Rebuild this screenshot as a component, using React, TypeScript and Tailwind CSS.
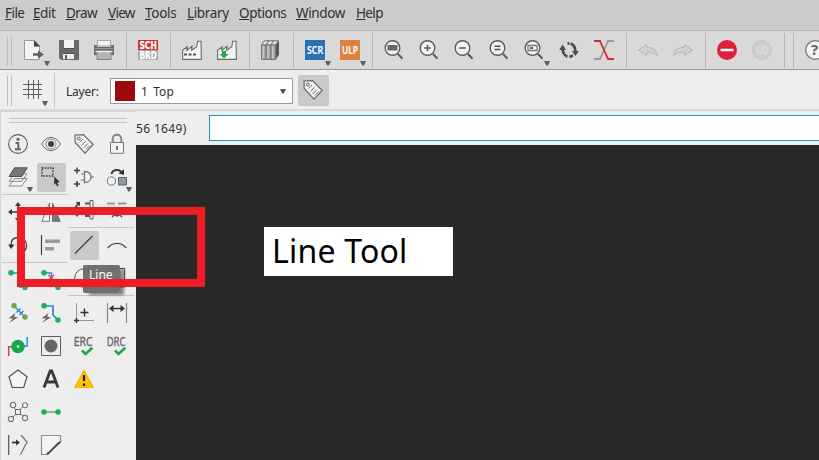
import type { ReactNode } from "react";

const DARK = "#5c5c5c";

function Icon({ children }: { children: ReactNode }) {
  return (
    <svg width="20" height="20" viewBox="0 0 20 20" fill="none" className="block shrink-0 overflow-visible">
      {children}
    </svg>
  );
}

function Caret({ className }: { className: string }) {
  return (
    <svg width="6" height="5" viewBox="0 0 6 5" className={`absolute ${className}`}>
      <path d="M0 0H6L3.8 4.6H2.2Z" fill="#5f5f5f" />
    </svg>
  );
}

function Tool({ children, menu }: { children: ReactNode; menu?: boolean }) {
  return (
    <div className="relative mr-[15px] shrink-0">
      {children}
      {menu && <Caret className="left-5 top-[21px]" />}
    </div>
  );
}

function Divider() {
  return <div className="-ml-[3px] mr-[11px] h-[35px] w-px shrink-0 bg-[#b5b5b5]" />;
}

function Grip() {
  return <div className="h-[30px] w-[5px] shrink-0 border-x border-[#bdbdbd]" />;
}

function Lens({ children }: { children?: ReactNode }) {
  return (
    <Icon>
      <path d="M14 14L18.5 18.7" stroke={DARK} strokeWidth="2" />
      <circle cx="8.5" cy="8" r="7.3" fill="#f2f2f2" stroke={DARK} strokeWidth="1.4" />
      {children}
    </Icon>
  );
}

function Factory({ children }: { children: ReactNode }) {
  return (
    <Icon>
      <path d="M.6 19.4V10.3L5.2 6.8L4.8 10.5L10 6.3L9.6 10.3L14.8 6.8L15.7 1.2H19L19.4 19.4Z" fill="#f4f4f4" stroke="#6a6a6a" strokeWidth="1.1" />
      {children}
    </Icon>
  );
}

function Check({ label }: { label: string }) {
  return (
    <Icon>
      <text x="-.3" y="9.5" fontSize="12.6" textLength="18.8" lengthAdjust="spacingAndGlyphs" fill="#666" stroke="#666" strokeWidth=".4" fontFamily="'Open Sans', sans-serif">{label}</text>
      <path d="M8 14.5L11.5 18L18.3 11.8" stroke="#16aa4b" strokeWidth="2.6" />
    </Icon>
  );
}

function Badge({ label, color }: { label: string; color: string }) {
  return (
    <Icon>
      <path d="M0 0H20V20H0Z" fill={color} />
      <text x="2" y="14" fontSize="10.6" fontWeight="600" textLength="16" lengthAdjust="spacingAndGlyphs" fill="white" stroke="white" strokeWidth=".2" fontFamily="'Open Sans', sans-serif">{label}</text>
    </Icon>
  );
}

function Cell({ children, active, menu }: { children?: ReactNode; active?: boolean; menu?: boolean }) {
  return (
    <div className="relative h-[33px] w-[33px] p-[2px]">
      <div className={`h-[29px] w-[29px] rounded-[2px] p-1 ${active ? "bg-[#c9c9c9]" : ""}`}>{children}</div>
      {menu && <Caret className="left-[25px] top-[26px]" />}
    </div>
  );
}

function Rule() {
  return <div className="col-span-2 h-[2px] border-t border-[#c6c6c6]" />;
}

const menus = [
  ["File", "w-[28px] tracking-[-0.55px]"],
  ["Edit", "w-[33px] tracking-[-0.4px]"],
  ["Draw", "w-[42px] tracking-[-0.6px]"],
  ["View", "w-[37px] tracking-[-0.7px]"],
  ["Tools", "w-[42px] tracking-[-0.3px]"],
  ["Library", "w-[52px] tracking-[-0.35px]"],
  ["Options", "w-[57px] tracking-[-0.4px]"],
  ["Window", "w-[60px] tracking-[-0.35px]"],
  ["Help", "w-[40px] tracking-[-0.65px]"],
];

function MenuBar() {
  return (
    <div className="flex h-[30px] items-center bg-[#cbcbcb] pb-[3px] pl-[5px] text-[13.5px] text-[#303030]">
      {menus.map(([name, style]) => (
        <div key={name} className={`shrink-0 whitespace-nowrap ${style}`}>
          <span className="underline decoration-1 underline-offset-1">{name[0]}</span>
          {name.slice(1)}
        </div>
      ))}
    </div>
  );
}

function MainToolbar() {
  return (
    <div className="flex h-[40px] w-[819px] overflow-hidden border-b border-t border-b-[#999] border-t-[#b5b5b5] bg-[#d9d9d9] pl-[7px] pt-[2px]">
      <div className="mr-3 mt-[3px]"><Grip /></div>
      <div className="flex [&>div.relative]:mt-[7px]">
        <Tool menu>
          <Icon>
            <path d="M.5.5H10L15.5 6V19.5H.5Z" fill="#f4f4f4" stroke="#999" />
            <path d="M10 0L16 6.5H10Z" fill="#3f3f3f" />
            <path d="M9 14.5H15" stroke={DARK} strokeWidth="2.4" />
            <path d="M14 10.5L20 14.5L14 18.5Z" fill={DARK} />
          </Icon>
        </Tool>
        <Tool>
          <Icon>
            <path d="M0 0H20V20H2L0 18Z" fill="#6a6a6a" />
            <path d="M5 0H15V8H5ZM4 14H15V19H4Z" fill="#f1f1f1" />
            <path d="M5 8.5H15M4 13.5H15" stroke="#505050" />
            <path d="M6 15H8V19H6Z" fill="#5b5b5b" />
          </Icon>
        </Tool>
        <Tool>
          <Icon>
            <path d="M3.5.5H16.5V6H3.5Z" fill="#f4f4f4" stroke="#aaa" />
            <path d="M0 5H3V7H17V5H20V15H0Z" fill="#696969" />
            <path d="M1 8.5H19" stroke="#999" />
            <path d="M3 11H17V19.5H3Z" fill="#b4b4b4" stroke="#888" />
            <path d="M1.5 11.5H18.5" stroke="#eee" strokeWidth="1.4" />
          </Icon>
        </Tool>
        <Divider />
        <Tool>
          <Icon>
            <path d="M0 0H20V10H0Z" fill="#cf3030" />
            <path d="M0 10H20V20H0Z" fill="#aaa" />
            <g fill="white" stroke="white" strokeWidth=".25" fontSize="10" fontWeight="bold" fontFamily="'DejaVu Sans', sans-serif">
              <text x="1.4" y="8.7" textLength="17.4" lengthAdjust="spacingAndGlyphs">SCH</text>
              <text x="1.4" y="18.9" textLength="17.4" lengthAdjust="spacingAndGlyphs">BRD</text>
            </g>
          </Icon>
        </Tool>
        <Divider />
        <Tool><Factory><path d="M2 14.5H14" stroke="#555" strokeWidth="1.8" strokeDasharray="3 1.5" /></Factory></Tool>
        <Tool><Factory><path d="M5 11H9V14H11.5L7 18.5L2.5 14H5Z" fill="#15b34b" /></Factory></Tool>
        <Divider />
        <Tool>
          <Icon>
            {[0, 4.7, 9.4].map((x) => (
              <g key={x} transform={`translate(${x} 0)`}>
                <path d="M.5 5L3 1L8 .5L5.5 5Z" fill="#e3e3e3" stroke="#707070" />
                <path d="M.5 5H5.2V19.5H.5Z" fill="#aaa" stroke="#747474" />
                <path d="M2.3 6V18" stroke="#d0d0d0" />
              </g>
            ))}
            <path d="M14.8 5L18 1V14.5L14.8 19.5Z" fill="#5a5a5a" />
          </Icon>
        </Tool>
        <Divider />
        <Tool menu><Badge label="SCR" color="#2a72b8" /></Tool>
        <Tool menu><Badge label="ULP" color="#dc843f" /></Tool>
        <Divider />
        <Tool><Lens><path d="M3.5 5H13.5V10.5H3.5Z" fill="#666" /></Lens></Tool>
        <Tool><Lens><path d="M5.2 8H11.8M8.5 4.7V11.3" stroke="#555" strokeWidth="1.5" /></Lens></Tool>
        <Tool><Lens><path d="M5.2 8H11.8" stroke="#555" strokeWidth="1.5" /></Lens></Tool>
        <Tool><Lens><path d="M5.5 6.3H11.5M5.5 9.5H11.5" stroke="#555" strokeWidth="1.4" /></Lens></Tool>
        <Tool menu>
          <Lens>
            <path d="M4 5.5H13V10.5H4Z" stroke="#777" strokeWidth="1.3" />
            <path d="M6 7H9V9H6Z" fill="#666" />
          </Lens>
        </Tool>
        <Tool>
          <Icon>
            <path d="M3.5 8C3.7 12 5.2 15.5 8.4 16.6M16.5 12C16.3 8 14.8 4.5 11.6 3.5" stroke="#4d4d4d" strokeWidth="2.7" />
            <path d="M.2 10L3.6 4.6L7 10ZM13 11H20L16.4 16Z" fill="#4d4d4d" />
            <path d="M8.5 3.7L10.5 3.2M10.5 17L14 15.5" stroke="#4d4d4d" strokeWidth="2.6" />
          </Icon>
        </Tool>
        <Tool>
          <Icon>
            <path d="M0 19H6L14 1H20" stroke="#9a9a9a" strokeWidth="1.8" />
            <path d="M0 1H6L14 19H20" stroke="#d52b23" strokeWidth="1.8" />
          </Icon>
        </Tool>
        <Divider />
        <Tool><Icon><path d="M.7 10L8.5 4.7V7.3C14 7.3 18.5 9 19.3 15.3C15.5 12.5 12.5 12 8.5 12.3V15.3Z" fill="#d2d2d2" stroke="#b3b3b3" /></Icon></Tool>
        <Tool><Icon><path d="M19.3 10L11.5 4.7V7.3C6 7.3 1.5 9 .7 15.3C4.5 12.5 7.5 12 11.5 12.3V15.3Z" fill="#d2d2d2" stroke="#b3b3b3" /></Icon></Tool>
        <Divider />
        <Tool>
          <Icon>
            <circle cx="10" cy="10" r="10" fill="#df203b" />
            <path d="M3.5 10H16.5" stroke="white" strokeWidth="2.5" />
          </Icon>
        </Tool>
        <Tool>
          <Icon>
            <circle cx="10" cy="10" r="9.5" fill="#cecece" stroke="#c4c4c4" />
            <text x="4" y="14" fontSize="11" textLength="12" lengthAdjust="spacingAndGlyphs" fill="#dfdfdf" stroke="#dfdfdf" strokeWidth=".4">GO</text>
          </Icon>
        </Tool>
        <Divider />
        <div className="-ml-[3px] mr-[11px] h-[35px] w-px shrink-0 bg-[#b5b5b5]" />
        <Tool>
          <Icon>
            <circle cx="10" cy="10" r="9.3" fill="#f4f4f4" stroke="#777" strokeWidth="1.3" />
            <text x="6" y="15.3" fontSize="15" fontWeight="bold" fill="#666">?</text>
          </Icon>
        </Tool>
      </div>
    </div>
  );
}

function Tag() {
  return (
    <Icon>
      <path d="M1 1L9.5.7L19.2 10.5L11 19.2L1.2 8.5Z" fill="#f0f0f0" stroke="#686868" strokeWidth="1.2" />
      <circle cx="4.8" cy="4.6" r="1.5" stroke="#666" />
      <path d="M9 5L5.5 8.5M11.7 7.2L7.5 11.3M14 9.5L9.7 14M15.8 11.5L12 15.3" stroke="#757575" />
    </Icon>
  );
}

function LayerBar() {
  return (
    <div className="flex h-[41px] items-start border-b-2 border-b-[#dadada] bg-[#eee] pl-[7px]">
      <div className="mt-[6px]"><Grip /></div>
      <div className="relative ml-[11px] mt-[9px]">
        <Icon>
          <path d="M5.5 1V20M10.5 1V20M15.5 1V20M0 5.5H19M0 10.5H19M0 15.5H19" stroke="#606060" />
        </Icon>
        <Caret className="left-[19px] top-[22px]" />
      </div>
      <div className="ml-[11px] mt-[3px] h-[35px] w-px bg-[#c5c5c5]" />
      <div className="ml-[11px] mt-[13px] w-[44px] text-[12px] leading-[17px] tracking-[-0.2px] text-[#303030]">Layer:</div>
      <div className="mt-[8px] flex h-[26px] w-[183px] items-center border border-[#999] bg-white pl-1 pr-[6px] text-[12px] text-[#303030]">
        <div className="mr-[6px] h-5 w-5 bg-[#9e090b]" />
        <span className="flex-1 pt-px tracking-[0.1px] [word-spacing:2px]">1 Top</span>
        <svg width="6" height="5" viewBox="0 0 6 5"><path d="M0 0H6L3.8 4.6H2.2Z" fill="#555" /></svg>
      </div>
      <div className="ml-[5px] mt-[5px] h-[31px] w-[31px] rounded-[2px] bg-[#c9c9c9] p-[5px]"><Tag /></div>
    </div>
  );
}

function Palette() {
  return (
    <div className="h-[349px] w-[136px] shrink-0 overflow-hidden border-l border-t border-[#d4d4d4] bg-[#eee] pl-px pt-[6px]">
      <div className="ml-[7px] h-[5px] w-[118px] border-y border-[#c6c6c6]" />
      <div className="mt-[5px] flex items-start">
        <div className="grid w-[66px] grid-cols-2">
          <Cell>
            <Icon>
              <circle cx="10" cy="10" r="9.4" stroke="#606060" strokeWidth="1.1" />
              <circle cx="10" cy="5.3" r="1.6" fill="#666" />
              <path d="M7.5 9H10.3V15M7 15.3H13" stroke="#666" strokeWidth="1.9" />
            </Icon>
          </Cell>
          <Cell>
            <Icon>
              <path d="M.8 10C5.5 1.3 14.5 1.3 19.2 10C14.5 18.7 5.5 18.7.8 10Z" stroke="#606060" />
              <circle cx="10" cy="10" r="5" stroke="#888" />
              <circle cx="10" cy="10" r="3" fill="#3d3d3d" />
            </Icon>
          </Cell>
          <Cell menu>
            <Icon>
              <path d="M1 19L6.5 11.5H19L13.7 19ZM1 14.3L6.5 6.8H19L13.7 14.3Z" fill="#f4f4f4" stroke="#8a8a8a" />
              <path d="M1 9.5L6.5.8H19.3L13.7 9.5Z" fill="#777" stroke="#4f4f4f" />
            </Icon>
          </Cell>
          <Cell active>
            <Icon>
              <path d="M1 1H12V9H1Z" stroke="#3d3d3d" strokeWidth="1.4" strokeDasharray="1.6 1.1" />
              <path d="M13.3 9.5L18.8 15L16.3 15.5L17.7 18.5L16 19.3L14.7 16.3L13.2 18Z" fill="#333" />
            </Icon>
          </Cell>
          <Rule />
          <Cell>
            <Icon>
              <path d="M10 3V17M3 10H17" stroke="#383838" strokeWidth="1.6" />
              <path d="M10 0L13 4H7ZM10 20L7 16H13ZM0 10L4 7V13ZM20 10L16 13V7Z" fill="#383838" />
            </Icon>
          </Cell>
          <Cell>
            <Icon>
              <path d="M8.5 1V19.3H.8Z" fill="#f5f5f5" stroke="#777" />
              <path d="M11.5 1V19.3H19.2Z" fill="#777" stroke="#707070" />
            </Icon>
          </Cell>
          <Cell>
            <Icon>
              <path d="M3 10C3 5 6 2.5 10 2.5C15 2.5 18.5 6 18.5 10.5C18.5 13.5 17 16 15 17.5" stroke="#404040" strokeWidth="1.3" />
              <path d="M0 9.5H6.5L3.2 14Z" fill="#383838" />
            </Icon>
          </Cell>
          <Cell>
            <Icon><path d="M.5 0V20" stroke="#404040" strokeWidth="1.2" /><path d="M4 4.5H19V8H4ZM4 12H13V15.5H4Z" fill="#999" /></Icon>
          </Cell>
          <Rule />
          <Cell>
            <Icon><path d="M3 3H12V17H17" stroke="#228be0" strokeWidth="1.6" /><circle cx="3" cy="2.8" r="2.8" fill="#1eb354" /><circle cx="17" cy="17.2" r="2.8" fill="#1eb354" /></Icon>
          </Cell>
          <Cell>
            <Icon><path d="M3 3H10.5V7" stroke="#228be0" strokeWidth="1.6" /><path d="M7.5 5L13 10.5M13 5L7.5 10.5" stroke="#e54545" strokeWidth="1.5" /><circle cx="3" cy="2.8" r="2.8" fill="#1eb354" /><circle cx="17" cy="17.2" r="2.8" fill="#1eb354" /></Icon>
          </Cell>
          <Cell>
            <Icon>
              <path d="M6 3L17 14" stroke="#228be0" strokeWidth="1.3" />
              <path d="M8.5 9.5L12.5 5.5M11.5 12L15.5 8" stroke="#228be0" strokeWidth="1.5" />
              <circle cx="6" cy="2.7" r="2.7" fill="#73a34b" /><circle cx="17" cy="14" r="2.7" fill="#73a34b" />
              <path d="M7.5 10L.7 15.2L5 15.5L.8 20L10 14.2L6.2 13.7Z" fill="#686868" />
            </Icon>
          </Cell>
          <Cell>
            <Icon>
              <path d="M3 3H12V12L17 17" stroke="#228be0" strokeWidth="1.7" />
              <circle cx="3" cy="2.7" r="2.8" fill="#17b451" /><circle cx="17" cy="17" r="2.8" fill="#17b451" />
              <path d="M7.5 10L.7 15.2L5 15.5L.8 20L10 14.2L6.2 13.7Z" fill="#686868" />
            </Icon>
          </Cell>
          <Cell>
            <Icon>
              <path d="M.7 20V10.7H4" stroke="#d44343" strokeWidth="1.5" /><path d="M19.2 1V10H16" stroke="#228be0" strokeWidth="1.5" />
              <circle cx="10" cy="10.5" r="6.8" fill="#17a94b" /><circle cx="10" cy="10.5" r="1.3" fill="#eee" />
            </Icon>
          </Cell>
          <Cell><Icon><path d="M.5.5H19.5V19.5H.5Z" stroke="#606060" /><circle cx="10" cy="10" r="6.5" fill="#666" /></Icon></Cell>
          <Cell><Icon><path d="M10 1L19 7.7L15.7 18.5H4.3L1 7.7Z" fill="#f4f4f4" stroke="#505050" strokeWidth="1.2" /></Icon></Cell>
          <Cell><Icon><path d="M3 18.5L9.2 2H10.8L17 18.5M5.5 13H14.5" stroke="#383838" strokeWidth="2.8" /></Icon></Cell>
          <Cell>
            <Icon>
              <path d="M5 4L8 8M15 4L12 8M3 17L8 12M17 15L12 12" stroke="#777" />
              <path d="M7.5 7.5H12.5V12.5H7.5Z" fill="#eee" stroke="#666" />
              <g fill="#f4f4f4" stroke="#777" strokeWidth="1.1"><circle cx="5" cy="3" r="2.7" /><circle cx="17" cy="3.2" r="2.5" /><circle cx="3" cy="17" r="2.6" /><circle cx="17" cy="16" r="2.6" /></g>
            </Icon>
          </Cell>
          <Cell><Icon><path d="M3 10H17" stroke="#999" strokeWidth="1.7" /><circle cx="3" cy="10" r="2.8" fill="#16b551" /><circle cx="17" cy="10" r="2.8" fill="#16b551" /></Icon></Cell>
          <Cell>
            <Icon><path d="M.7 0V20" stroke="#555" strokeWidth="1.2" /><path d="M4 7.5H8" stroke="#333" strokeWidth="1.7" /><path d="M8 4.5L12 7.5L8 10.5Z" fill="#333" /><path d="M13 0L19 7L12.5 19.5" stroke="#777" strokeWidth="1.3" /></Icon>
          </Cell>
          <Cell><Icon><path d="M7 19.5H.5V.5H19.5V7L7 19.5Z" fill="#f3f3f3" stroke="#909090" strokeWidth="1.2" /><path d="M6 19L8 17.5L17 8.5L19.5 7" stroke="#3e3e3e" strokeWidth="1.6" /></Icon></Cell>
        </div>
        <div className="grid w-[66px] grid-cols-2">
          <Cell><Tag /></Cell>
          <Cell>
            <Icon><path d="M5.7 8V5C5.7-.6 14.3-.6 14.3 5V8" stroke="#888" strokeWidth="2" /><path d="M3.5 8.5H16.5V19.3H3.5Z" fill="#f4f4f4" stroke="#777" /><path d="M10 12V16" stroke="#666" strokeWidth="1.8" /></Icon>
          </Cell>
          <Cell>
            <Icon><path d="M0 3.5H6M3 .5V6.5M0 17H6M3 14V20" stroke="#404040" strokeWidth="1.5" /><path d="M7 7H10M7 13H10M17 10H20" stroke="#777" /><path d="M10.5 4.5C15 4.5 17 7 17 10C17 13.5 14 15.5 10.5 15.5Z" fill="#f4f4f4" stroke="#777" strokeWidth="1.3" /></Icon>
          </Cell>
          <Cell menu>
            <Icon><path d="M4.5 7C5.5 2.2 12.5 1.5 15 6" stroke="#333" strokeWidth="1.8" /><path d="M11.5 6.5L17 2.3V8Z" fill="#333" /><circle cx="4.4" cy="14" r="4.1" fill="#f4f4f4" stroke="#777" /><path d="M11.5 10.5H19.5V18H11.5Z" fill="#999" stroke="#506675" /></Icon>
          </Cell>
          <Cell>
            <Icon>
              <path d="M3 15V9M1 8L4 4" stroke="#404040" strokeWidth="1.8" />
              <path d="M1.5 2H6V6.5ZM0 13H6L3 17Z" fill="#404040" />
              <path d="M11 3.5H16M11 16H16" stroke="#555" strokeWidth="2" /><path d="M16 .5H19V19H16Z" fill="#f4f4f4" stroke="#666" />
            </Icon>
          </Cell>
          <Cell><Icon><path d="M0 3.5H8M11 3.5H19.5" stroke="#999" strokeWidth="2" /><path d="M5 17L7.5 14.8L10 16L12.5 14.8L15 17" stroke="#505050" strokeWidth="1.5" /></Icon></Cell>
          <Rule />
          <Cell active><Icon><path d="M1 18.5L18.5 1" stroke="#3f3f3f" strokeWidth="1.3" /></Icon></Cell>
          <Cell><Icon><path d="M.7 13C6 6.8 14 6.8 19.3 13" stroke="#505050" strokeWidth="1.4" /></Icon></Cell>
          <Cell><Icon><circle cx="10" cy="10" r="9.3" stroke="#555" /></Icon></Cell>
          <Cell><Icon><path d="M2.5.5H17.5V19H2.5Z" stroke="#555" strokeWidth="1.2" /></Icon></Cell>
          <Rule />
          <Cell><Icon><path d="M2.5 0V15M5 17.5H20" stroke="#999" /><path d="M0 17.5H5M2.5 15V20M6.5 9.5H14.5M10.5 5.5V13.5" stroke="#333" strokeWidth="1.4" /></Icon></Cell>
          <Cell><Icon><path d="M.5 0V20M19.5 0V20" stroke="#888" strokeWidth="1.2" /><path d="M5 5.5H15" stroke="#333" strokeWidth="1.4" /><path d="M2 5.5L6.5 2V9ZM18 5.5L13.5 2V9Z" fill="#333" /></Icon></Cell>
          <Cell><Check label="ERC" /></Cell>
          <Cell><Check label="DRC" /></Cell>
          <Cell><Icon><path d="M10 1.2L19.3 18.5H.7Z" fill="#ffc20e" stroke="#efb500" strokeWidth="1.2" strokeLinejoin="round" /><path d="M10 6V12M10 14.5V17" stroke="#252525" strokeWidth="2.2" /></Icon></Cell>
        </div>
      </div>
    </div>
  );
}

export default function App() {
  return (
    <div className="relative h-[460px] w-[819px] overflow-hidden bg-[#282828] font-['Noto_Sans',sans-serif]">
      <MenuBar />
      <MainToolbar />
      <LayerBar />
      <div className="flex">
        <Palette />
        <div className="flex min-w-0 flex-1 flex-col">
          <div className="flex h-[34px] items-start bg-[#eee] pt-[4px]">
            <div className="w-[73px] whitespace-nowrap pt-[5px] text-[12px] leading-[17px] tracking-[0.35px] text-[#303030]">56 1649)</div>
            <div className="h-[26px] flex-1 border border-r-0 border-[#1593d2] bg-white" />
          </div>
          <div className="h-[315px] bg-[#282828]" />
        </div>
      </div>
      <div className="absolute left-[264px] top-[227px] h-[49px] w-[189px] bg-white pl-[8px] text-[32px] leading-[47px] tracking-[0.2px] text-black">Line Tool</div>
      <div className="absolute left-[83px] top-[265px] h-[28px] w-[37px] rounded-[2px] bg-[#686868]/95 pl-[6px] pt-[2px] text-[12px] leading-[16px] text-white shadow-[5px_3px_3px_-1px_rgba(0,0,0,0.45)]">Line</div>
      <div className="absolute left-[17px] top-[207px] h-[80px] w-[188px] border-8 border-[#ee1c24]" />
    </div>
  );
}
